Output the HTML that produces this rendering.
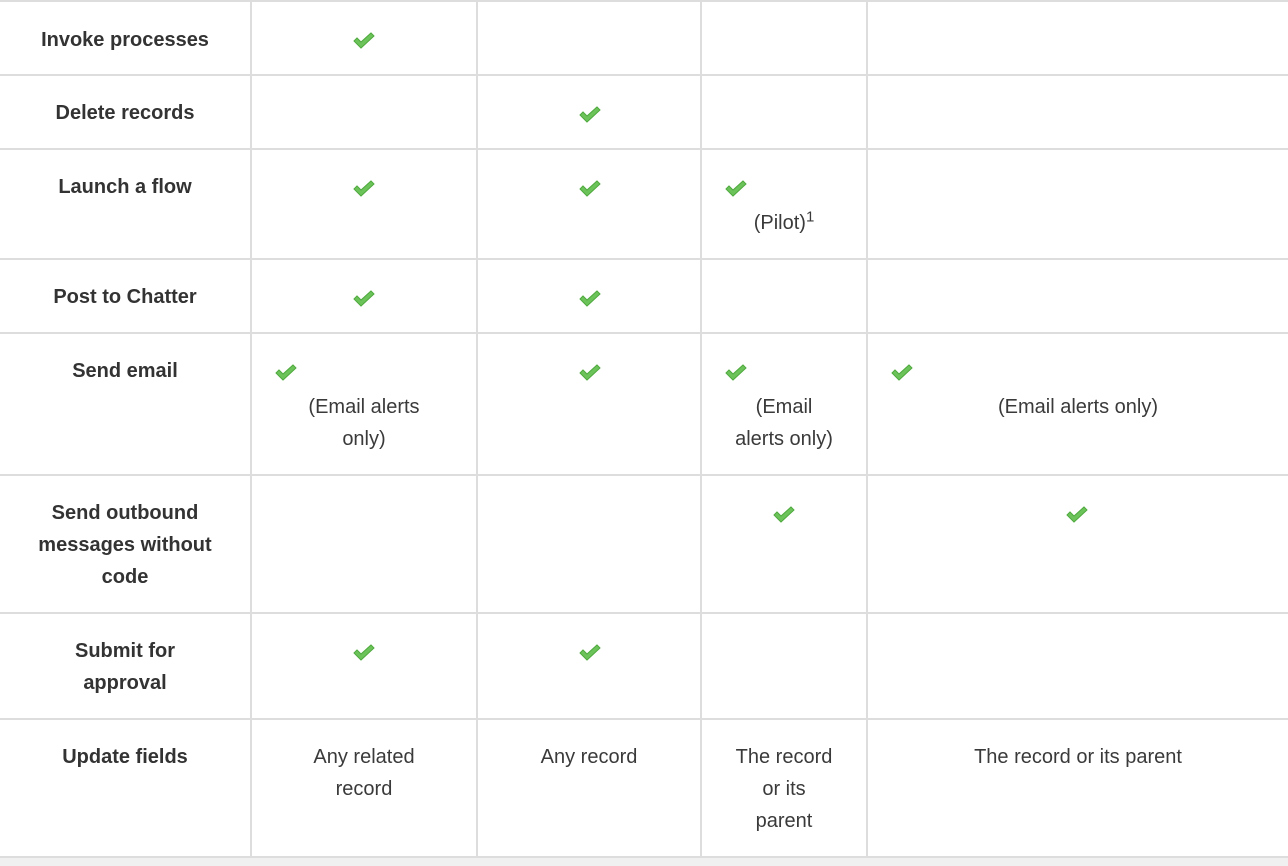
<!DOCTYPE html>
<html><head><meta charset="utf-8"><style>
body{margin:0;width:1288px;height:866px;background:#fff;position:relative;overflow:hidden;font-family:"Liberation Sans",sans-serif;color:#3a3a3a}
.h{position:absolute;left:0;width:1288px;height:2px;background:#dddddd}
.v{position:absolute;top:0;height:858px;width:2px;background:#dddddd}
.t{position:absolute;font-size:20px;line-height:32px;text-align:center}
.b{font-weight:bold;color:#333}
.c{position:absolute;width:22px;height:17px}
</style></head><body>
<div style="position:absolute;left:0;top:858px;width:1288px;height:8px;background:#f0f0f0"></div>
<div class="h" style="top:0"></div><div class="h" style="top:74px"></div><div class="h" style="top:148px"></div><div class="h" style="top:258px"></div><div class="h" style="top:332px"></div><div class="h" style="top:474px"></div><div class="h" style="top:612px"></div><div class="h" style="top:718px"></div><div class="h" style="top:856px"></div>
<div class="v" style="left:250px"></div><div class="v" style="left:476px"></div><div class="v" style="left:700px"></div><div class="v" style="left:866px"></div>

<div class="t b" style="left:0;width:250px;top:24px">Invoke processes</div>
<div class="t b" style="left:0;width:250px;top:97px">Delete records</div>
<div class="t b" style="left:0;width:250px;top:171px">Launch a flow</div>
<div class="t b" style="left:0;width:250px;top:281px">Post to Chatter</div>
<div class="t b" style="left:0;width:250px;top:355px">Send email</div>
<div class="t b" style="left:0;width:250px;top:497px">Send outbound<br>messages without<br>code</div>
<div class="t b" style="left:0;width:250px;top:635px">Submit for<br>approval</div>
<div class="t b" style="left:0;width:250px;top:741px">Update fields</div>

<div class="t" style="left:702px;width:164px;top:207px">(Pilot)<sup style="font-size:15px;line-height:0">1</sup></div>
<div class="t" style="left:252px;width:224px;top:391px">(Email alerts<br>only)</div>
<div class="t" style="left:702px;width:164px;top:391px">(Email<br>alerts only)</div>
<div class="t" style="left:868px;width:420px;top:391px">(Email alerts only)</div>
<div class="t" style="left:252px;width:224px;top:741px">Any related<br>record</div>
<div class="t" style="left:478px;width:222px;top:741px">Any record</div>
<div class="t" style="left:702px;width:164px;top:741px">The record<br>or its<br>parent</div>
<div class="t" style="left:868px;width:420px;top:741px">The record or its parent</div>

<svg width="0" height="0" style="position:absolute"><defs><symbol id="ck" viewBox="0 0 22 17"><path d="M1 9 L4 6 L8 10 L18 1 L21 4 L8 16 Z" fill="#6cc35a" stroke="#4faa3e" stroke-width="1"/></symbol></defs></svg>
<svg class="c" style="left:353px;top:32px"><use href="#ck"/></svg>
<svg class="c" style="left:579px;top:106px"><use href="#ck"/></svg>
<svg class="c" style="left:353px;top:180px"><use href="#ck"/></svg>
<svg class="c" style="left:579px;top:180px"><use href="#ck"/></svg>
<svg class="c" style="left:725px;top:180px"><use href="#ck"/></svg>
<svg class="c" style="left:353px;top:290px"><use href="#ck"/></svg>
<svg class="c" style="left:579px;top:290px"><use href="#ck"/></svg>
<svg class="c" style="left:275px;top:364px"><use href="#ck"/></svg>
<svg class="c" style="left:579px;top:364px"><use href="#ck"/></svg>
<svg class="c" style="left:725px;top:364px"><use href="#ck"/></svg>
<svg class="c" style="left:891px;top:364px"><use href="#ck"/></svg>
<svg class="c" style="left:773px;top:506px"><use href="#ck"/></svg>
<svg class="c" style="left:1066px;top:506px"><use href="#ck"/></svg>
<svg class="c" style="left:353px;top:644px"><use href="#ck"/></svg>
<svg class="c" style="left:579px;top:644px"><use href="#ck"/></svg>
</body></html>
